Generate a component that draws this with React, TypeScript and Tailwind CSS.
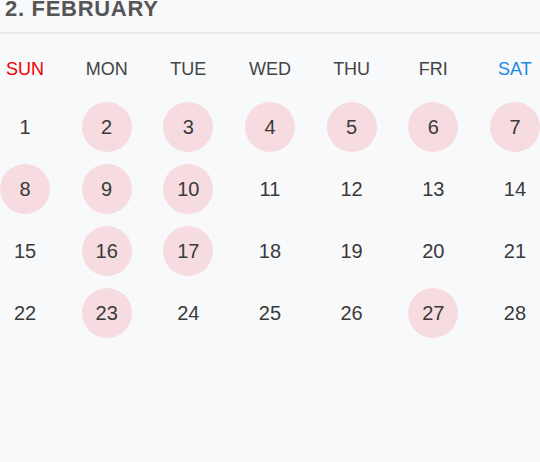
import React from "react";

const DAYS = ["SUN", "MON", "TUE", "WED", "THU", "FRI", "SAT"];

// days that have a mark in February
const MARKED = [2, 3, 4, 5, 6, 7, 8, 9, 10, 16, 17, 23, 27];

function dayColor(idx: number) {
  if (idx === 0) return "text-[#f00000]";
  if (idx === 6) return "text-[#1e88e5]";
  return "text-[#444]";
}

export default function App() {
  const weeks: number[][] = [];
  for (let w = 0; w < 4; w++) {
    weeks.push(Array.from({ length: 7 }, (_, i) => w * 7 + i + 1));
  }

  return (
    <div
      className="h-[462px] w-[540px] overflow-hidden bg-[#f8f9fb]"
      style={{ fontFamily: '"Liberation Sans", Arial, sans-serif' }}
    >
      <div className="h-[34px] border-b-2 border-[#e8e9eb]">
        <h1 className="pl-[5px] text-[22px] font-bold leading-[18px] tracking-[0.7px] text-[#555]">
          2. FEBRUARY
        </h1>
      </div>

      <div className="mt-[23px] flex justify-between">
        {DAYS.map((d, i) => (
          <div
            key={d}
            className={`w-[50px] text-center text-[18px] leading-6 ${dayColor(i)}`}
          >
            {d}
          </div>
        ))}
      </div>

      <div className="mt-[21px] flex flex-col gap-3">
        {weeks.map((week, wi) => (
          <div key={wi} className="flex justify-between">
            {week.map((n) => (
              <div
                key={n}
                className={`flex h-[50px] w-[50px] items-center justify-center rounded-full text-[20px] text-[#3a3a3a] ${
                  MARKED.includes(n) ? "bg-[#f6dce0]" : ""
                }`}
              >
                {n}
              </div>
            ))}
          </div>
        ))}
      </div>
    </div>
  );
}
